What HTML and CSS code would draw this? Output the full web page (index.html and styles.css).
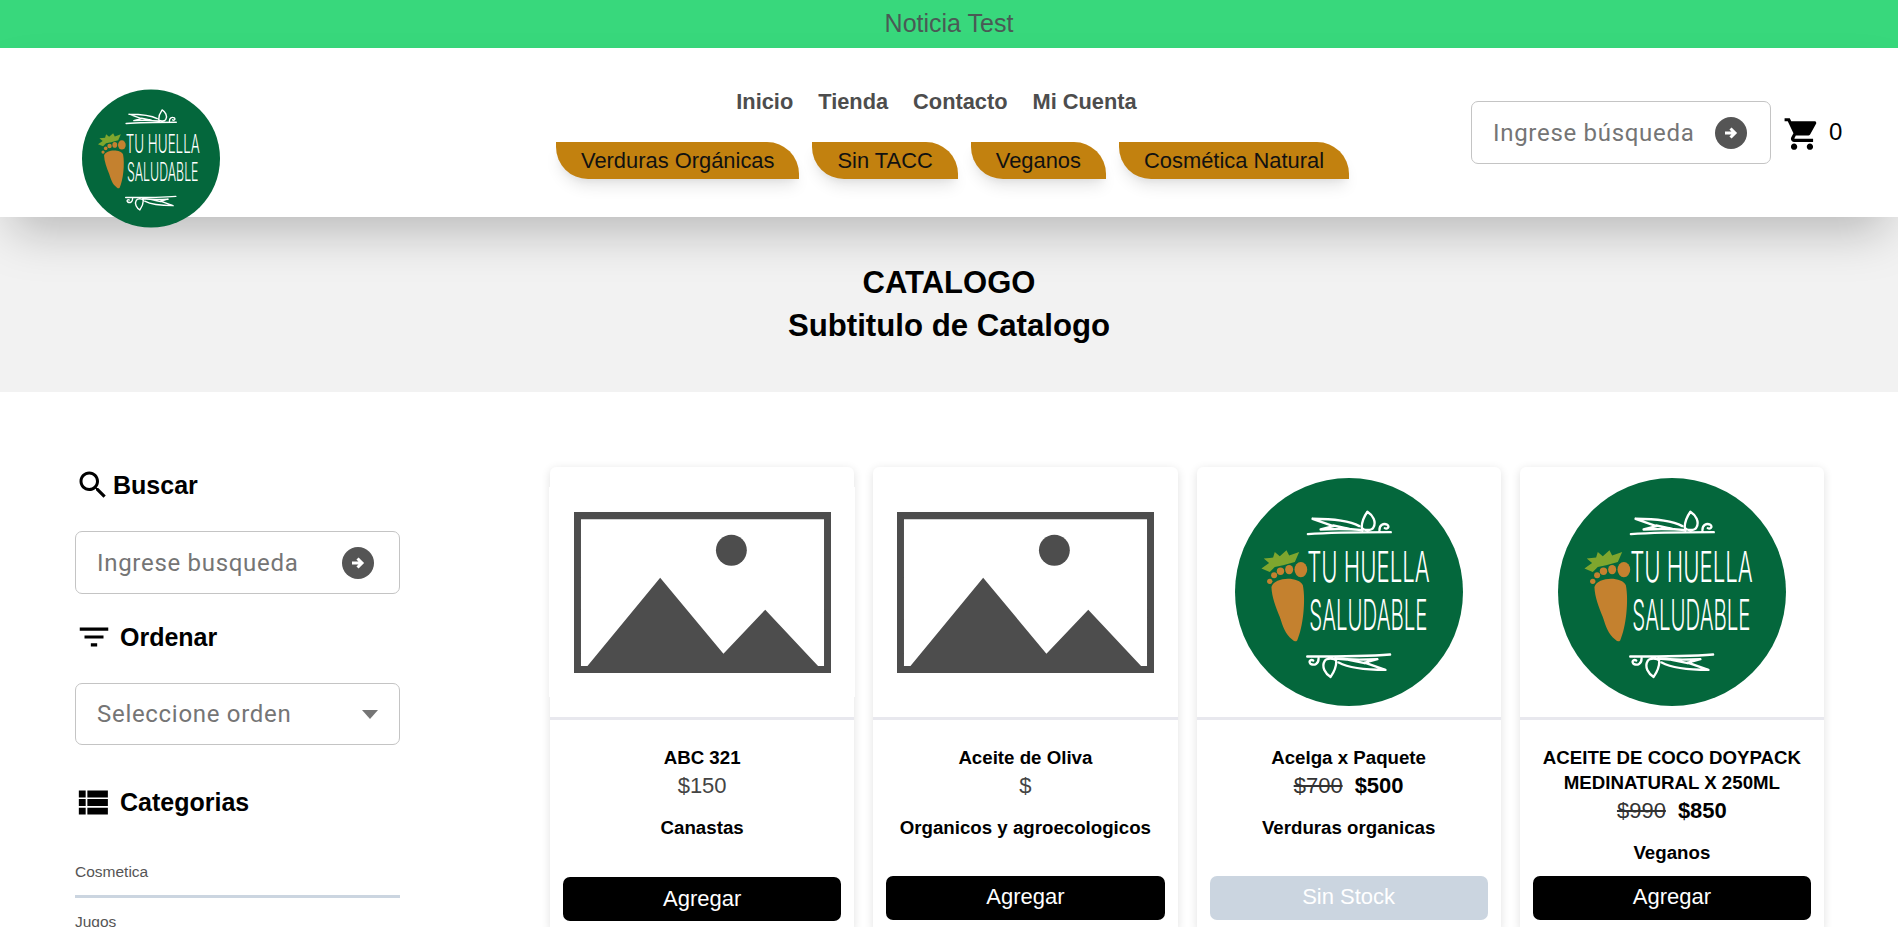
FILE: index.html
```html
<!DOCTYPE html>
<html lang="es">
<head>
<meta charset="utf-8">
<title>Tu Huella Saludable - Catalogo</title>
<link rel="stylesheet" href="styles.css">
</head>
<body>
<div class="notice">Noticia Test</div>
<header class="header">
  <svg class="logo logo-head" viewBox="46 24 682 682" aria-label="Tu Huella Saludable">
    <circle cx="387" cy="365" r="341" fill="#04673c"/>
    <g fill="none" stroke="#fff" stroke-width="7" stroke-linecap="round" stroke-linejoin="round">
      <path d="M264 192 C340 186 430 186 512 186 M278 146 C330 146 385 150 418 168 M278 146 L340 168 L302 178 C340 176 390 176 428 180 M340 166 L388 176 M425 172 C425 150 435 135 442 125 C458 135 470 155 460 172 C455 182 430 182 425 172Z M478 180 C478 164 490 158 502 164 C510 172 500 178 494 174"/>
      <path transform="rotate(180 387 372)" d="M264 192 C340 186 430 186 512 186 M278 146 C330 146 385 150 418 168 M278 146 L340 168 L302 178 C340 176 390 176 428 180 M340 166 L388 176 M425 172 C425 150 435 135 442 125 C458 135 470 155 460 172 C455 182 430 182 425 172Z M478 180 C478 164 490 158 502 164 C510 172 500 178 494 174"/>
    </g>
    <path d="M125 295 L148 278 L132 265 L160 262 L165 245 L180 258 L200 240 L208 256 L238 245 L225 275 L190 285 L165 290 L150 305Z" fill="#7fa62e"/>
    <g fill="#c4812f">
      <ellipse cx="243" cy="298" rx="19" ry="23"/><ellipse cx="208" cy="298" rx="12" ry="14"/><circle cx="182" cy="303" r="11"/><circle cx="163" cy="315" r="9"/><circle cx="150" cy="333" r="8"/>
      <path d="M155 350 C165 318 238 318 249 345 C258 390 250 470 232 510 Q226 516 218 508 C195 490 190 470 180 440 C168 410 156 380 155 350Z"/>
    </g>
    <text class="logo-text" transform="translate(262 336) scale(.53 1)">TU HUELLA</text>
    <text class="logo-text" transform="translate(268 478) scale(.49 1)">SALUDABLE</text>
  </svg>
  <div class="nav-col">
    <nav class="links"><a>Inicio</a><a>Tienda</a><a>Contacto</a><a>Mi Cuenta</a></nav>
    <div class="chips"><a class="chip">Verduras Orgánicas</a><a class="chip">Sin TACC</a><a class="chip">Veganos</a><a class="chip">Cosmética Natural</a></div>
  </div>
  <div class="tools">
    <div class="field field-head">
      <span class="ph">Ingrese búsqueda</span>
      <svg class="go" viewBox="0 0 32 32"><circle cx="16" cy="16" r="16" fill="#555"/><path d="M10 16h10M15.500 11.500 20 16l-4.500 4.500" fill="none" stroke="#fff" stroke-width="3"/></svg>
    </div>
    <svg class="cart" viewBox="0 0 24 24"><path d="M7 18c-1.100 0-1.990.9-1.990 2S5.900 22 7 22s2-.9 2-2-.9-2-2-2zM1 2v2h2l3.600 7.590-1.350 2.450c-.16.28-.25.61-.25.96 0 1.100.9 2 2 2h12v-2H7.420c-.14 0-.25-.11-.25-.25l.03-.12.9-1.630h7.450c.75 0 1.410-.41 1.750-1.030l3.580-6.470c.08-.14.12-.31.12-.48 0-.55-.45-1-1-1H5.210l-.94-2H1zm16 16c-1.100 0-1.990.9-1.990 2s.89 2 1.990 2 2-.9 2-2-.9-2-2-2z"/></svg>
    <span class="count">0</span>
  </div>
</header>
<section class="hero">
  <h1>CATALOGO</h1>
  <h2>Subtitulo de Catalogo</h2>
</section>
<main class="main">
  <aside class="side">
    <h3 class="side-h"><svg class="ic-search" viewBox="0 0 24 24"><path d="M15.500 14h-.79l-.28-.27C15.410 12.590 16 11.110 16 9.500 16 5.910 13.090 3 9.500 3S3 5.910 3 9.500 5.910 16 9.500 16c1.610 0 3.090-.59 4.230-1.570l.27.28v.79l5 4.990L20.490 19l-4.990-5zm-6 0C7.010 14 5 11.990 5 9.500S7.010 5 9.500 5 14 7.010 14 9.500 11.990 14 9.500 14z"/></svg>Buscar</h3>
    <div class="field field-side">
      <span class="ph">Ingrese busqueda</span>
      <svg class="go" viewBox="0 0 32 32"><circle cx="16" cy="16" r="16" fill="#555"/><path d="M10 16h10M15.500 11.500 20 16l-4.500 4.500" fill="none" stroke="#fff" stroke-width="3"/></svg>
    </div>
    <h3 class="side-h h-order"><svg class="ic-filter" viewBox="0 0 24 24"><path d="M10 18h4v-2h-4v2zM3 6v2h18V6H3zm3 7h12v-2H6v2z"/></svg>Ordenar</h3>
    <div class="field field-select">
      <span class="ph">Seleccione orden</span>
      <svg class="caret" viewBox="0 0 16 9"><path d="M0 0h16L8 9z" fill="#757575"/></svg>
    </div>
    <h3 class="side-h h-cat"><svg class="ic-list" viewBox="0 0 24 24"><path d="M4 14h4v-4H4v4zm0 5h4v-4H4v4zM4 9h4V5H4v4zm5 5h12v-4H9v4zm0 5h12v-4H9v4zM9 5v4h12V5H9z"/></svg>Categorias</h3>
    <ul class="cats"><li>Cosmetica</li><li>Jugos</li></ul>
  </aside>
  <section class="grid">
    <article class="card card-first">
      <div class="pic"><svg class="noimg" viewBox="0 0 258 161" preserveAspectRatio="none"><path fill="#4d4d4d" fill-rule="evenodd" d="M0 0h258v161H0zM7 7.300V154h6.500L86.500 65.700 150 141.700l42-44 53 56.300h6V7.300z"/><circle cx="158" cy="38.300" r="15.500" fill="#4d4d4d"/></svg></div>
      <div class="body">
        <h4 class="title">ABC 321</h4>
        <div class="price">$150</div>
        <div class="cat">Canastas</div>
        <a class="btn">Agregar</a>
      </div>
    </article>
    <article class="card">
      <div class="pic"><svg class="noimg" viewBox="0 0 258 161" preserveAspectRatio="none"><path fill="#4d4d4d" fill-rule="evenodd" d="M0 0h258v161H0zM7 7.300V154h6.500L86.500 65.700 150 141.700l42-44 53 56.300h6V7.300z"/><circle cx="158" cy="38.300" r="15.500" fill="#4d4d4d"/></svg></div>
      <div class="body">
        <h4 class="title">Aceite de Oliva</h4>
        <div class="price">$</div>
        <div class="cat">Organicos y agroecologicos</div>
        <a class="btn">Agregar</a>
      </div>
    </article>
    <article class="card">
      <div class="pic"><svg class="logo logo-card" viewBox="46 24 682 682" aria-label="Tu Huella Saludable">
        <circle cx="387" cy="365" r="341" fill="#04673c"/>
        <g fill="none" stroke="#fff" stroke-width="7" stroke-linecap="round" stroke-linejoin="round">
          <path d="M264 192 C340 186 430 186 512 186 M278 146 C330 146 385 150 418 168 M278 146 L340 168 L302 178 C340 176 390 176 428 180 M340 166 L388 176 M425 172 C425 150 435 135 442 125 C458 135 470 155 460 172 C455 182 430 182 425 172Z M478 180 C478 164 490 158 502 164 C510 172 500 178 494 174"/>
          <path transform="rotate(180 387 372)" d="M264 192 C340 186 430 186 512 186 M278 146 C330 146 385 150 418 168 M278 146 L340 168 L302 178 C340 176 390 176 428 180 M340 166 L388 176 M425 172 C425 150 435 135 442 125 C458 135 470 155 460 172 C455 182 430 182 425 172Z M478 180 C478 164 490 158 502 164 C510 172 500 178 494 174"/>
        </g>
        <path d="M125 295 L148 278 L132 265 L160 262 L165 245 L180 258 L200 240 L208 256 L238 245 L225 275 L190 285 L165 290 L150 305Z" fill="#7fa62e"/>
        <g fill="#c4812f">
          <ellipse cx="243" cy="298" rx="19" ry="23"/><ellipse cx="208" cy="298" rx="12" ry="14"/><circle cx="182" cy="303" r="11"/><circle cx="163" cy="315" r="9"/><circle cx="150" cy="333" r="8"/>
          <path d="M155 350 C165 318 238 318 249 345 C258 390 250 470 232 510 Q226 516 218 508 C195 490 190 470 180 440 C168 410 156 380 155 350Z"/>
        </g>
        <text class="logo-text" transform="translate(262 336) scale(.53 1)">TU HUELLA</text>
        <text class="logo-text" transform="translate(268 478) scale(.49 1)">SALUDABLE</text>
      </svg></div>
      <div class="body">
        <h4 class="title">Acelga x Paquete</h4>
        <div class="price"><s>$700</s><b>$500</b></div>
        <div class="cat">Verduras organicas</div>
        <a class="btn btn-off">Sin Stock</a>
      </div>
    </article>
    <article class="card">
      <div class="pic"><svg class="logo logo-card" viewBox="46 24 682 682" aria-label="Tu Huella Saludable">
        <circle cx="387" cy="365" r="341" fill="#04673c"/>
        <g fill="none" stroke="#fff" stroke-width="7" stroke-linecap="round" stroke-linejoin="round">
          <path d="M264 192 C340 186 430 186 512 186 M278 146 C330 146 385 150 418 168 M278 146 L340 168 L302 178 C340 176 390 176 428 180 M340 166 L388 176 M425 172 C425 150 435 135 442 125 C458 135 470 155 460 172 C455 182 430 182 425 172Z M478 180 C478 164 490 158 502 164 C510 172 500 178 494 174"/>
          <path transform="rotate(180 387 372)" d="M264 192 C340 186 430 186 512 186 M278 146 C330 146 385 150 418 168 M278 146 L340 168 L302 178 C340 176 390 176 428 180 M340 166 L388 176 M425 172 C425 150 435 135 442 125 C458 135 470 155 460 172 C455 182 430 182 425 172Z M478 180 C478 164 490 158 502 164 C510 172 500 178 494 174"/>
        </g>
        <path d="M125 295 L148 278 L132 265 L160 262 L165 245 L180 258 L200 240 L208 256 L238 245 L225 275 L190 285 L165 290 L150 305Z" fill="#7fa62e"/>
        <g fill="#c4812f">
          <ellipse cx="243" cy="298" rx="19" ry="23"/><ellipse cx="208" cy="298" rx="12" ry="14"/><circle cx="182" cy="303" r="11"/><circle cx="163" cy="315" r="9"/><circle cx="150" cy="333" r="8"/>
          <path d="M155 350 C165 318 238 318 249 345 C258 390 250 470 232 510 Q226 516 218 508 C195 490 190 470 180 440 C168 410 156 380 155 350Z"/>
        </g>
        <text class="logo-text" transform="translate(262 336) scale(.53 1)">TU HUELLA</text>
        <text class="logo-text" transform="translate(268 478) scale(.49 1)">SALUDABLE</text>
      </svg></div>
      <div class="body">
        <h4 class="title">ACEITE DE COCO DOYPACK MEDINATURAL X 250ML</h4>
        <div class="price"><s>$990</s><b>$850</b></div>
        <div class="cat">Veganos</div>
        <a class="btn">Agregar</a>
      </div>
    </article>
  </section>
</main>
</body>
</html>
```

FILE: styles.css
```css
* { box-sizing: border-box; }
html, body { margin: 0; height: 100%; overflow: hidden; }
body { font-family: "Liberation Sans", Arial, sans-serif; background: #fff; color: #000; }

.notice { height: 48px; line-height: 46px; background: #38d87c; color: #4a5a55; font-size: 25px; text-align: center; }

.header { position: relative; z-index: 2; display: flex; height: 169px; background: #fff; box-shadow: 0 25px 50px -12px rgba(0,0,0,.25); }
.logo-head { flex: none; width: 138px; height: 139px; margin: 41px 0 0 82px; }
.logo { display: block; }
.logo-text { font-family: "Inter", "Liberation Sans", sans-serif; font-weight: 300; font-size: 125px; fill: #fff; }

.nav-col { flex: none; width: 791px; margin-left: 337px; display: flex; flex-direction: column; align-items: center; }
.links { display: flex; gap: 25px; margin: 40px 32px 0 0; height: 28px; font-size: 21.8px; line-height: 28px; font-weight: 700; color: #4d4d4d; }
.chips { display: flex; gap: 13px; margin-top: 26px; }
.chip { height: 37px; line-height: 38px; padding: 0 25px; font-size: 21.9px; color: #111; background: #c2810f; border-radius: 0 32px 0 32px; box-shadow: 0 10px 15px -3px rgba(0,0,0,.1), 0 4px 6px -2px rgba(0,0,0,.05); white-space: nowrap; }

.tools { display: flex; align-items: flex-start; margin-left: 123px; }
.field { display: flex; align-items: center; justify-content: space-between; background: #fff; border: 1px solid #c4c4c4; border-radius: 7px; }
.field-head { width: 300px; height: 63px; margin-top: 53px; padding: 0 23px 0 21px; }
.ph { font-family: Roboto, sans-serif; font-size: 24px; letter-spacing: .7px; color: #757575; white-space: nowrap; }
.go { flex: none; width: 32px; height: 32px; }
.cart { flex: none; width: 38px; height: 38px; margin: 67px 0 0 12px; }
.count { margin: 70px 0 0 8px; font-size: 24px; line-height: 28px; }

.hero { height: 175px; padding-top: 44px; background: #f2f2f2; text-align: center; }
.hero h1 { margin: 0; font-size: 31px; line-height: 43px; font-weight: 700; }
.hero h2 { margin: 0; font-size: 31.2px; line-height: 43px; font-weight: 700; }

.main { display: flex; padding: 75px 0 0 75px; }
.side { flex: none; width: 325px; }
.side-h { display: flex; align-items: center; height: 36px; margin: 0; font-size: 25px; font-weight: 700; }
.ic-search { width: 36px; height: 36px; margin-right: 2px; }
.ic-filter { width: 38px; height: 38px; margin-right: 7px; }
.ic-list { width: 41px; height: 41px; margin: 0 7px 0 -3px; }
.field-side { height: 63px; margin-top: 28px; padding: 0 25px 0 21px; }
.h-order { margin-top: 25px; }
.field-select { height: 62px; margin-top: 28px; padding: 0 21px 0 21px; }
.caret { width: 16px; height: 9px; }
.h-cat { margin-top: 39px; }
.cats { list-style: none; margin: 28px 0 0; padding: 0; }
.cats li { padding: 14px 0 13px; font-size: 15.5px; line-height: 20px; color: #555; border-bottom: 3px solid #cbd5e0; }

.grid { flex: none; align-self: flex-start; width: 1274px; margin-left: 150px; display: grid; grid-template-columns: repeat(4, 1fr); gap: 19px; }
.card { display: flex; flex-direction: column; background: #fff; border-radius: 6px; box-shadow: 0 2px 10px rgba(0,0,0,.12); }
.pic { position: relative; flex: none; height: 250px; display: flex; align-items: center; justify-content: center; }
.card-first .pic::before { content: ""; position: absolute; top: 20px; bottom: 20px; left: -1px; right: -1px; background: #fff; }
.noimg { position: relative; display: block; width: 257px; height: 161px; }
.logo-card { width: 228px; height: 228px; }
.body { flex: 1; display: flex; flex-direction: column; align-items: stretch; padding: 25px 13px 12px; border-top: 3px solid #e8e8ee; text-align: center; }
.title { margin: 0; font-size: 18.7px; line-height: 25px; font-weight: 700; }
.price { height: 30px; margin-top: 1px; font-size: 22px; line-height: 30px; color: #444; }
.price s { color: #333; margin-right: 12px; }
.price b { color: #000; }
.cat { margin: 14px 0 11px; font-size: 18.7px; line-height: 25px; font-weight: 700; }
.btn { display: block; height: 44px; margin-top: auto; line-height: 42px; font-size: 22px; color: #fff; background: #000; border-radius: 7px; }
.card-first .btn { transform: translateY(1px); line-height: 44px; }
.btn-off { background: #cbd5e0; }
```
